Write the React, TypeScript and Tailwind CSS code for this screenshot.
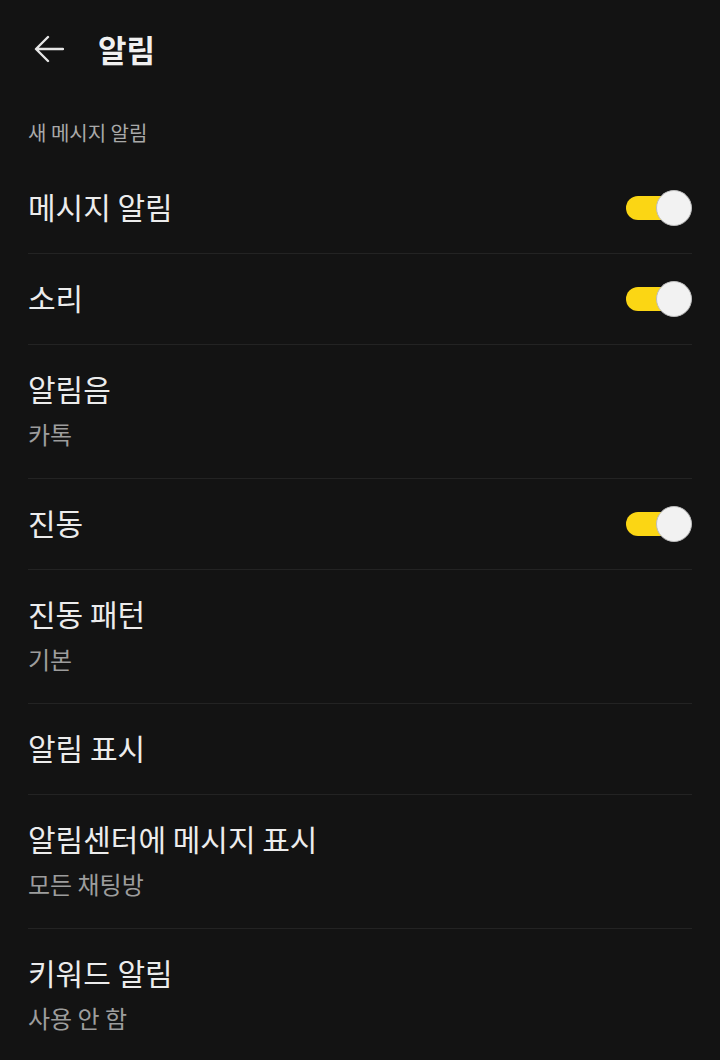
import React, { useState } from "react";

type Row = {
  title: string;
  sub?: string;
  toggle?: boolean;
};

const ROWS: Row[] = [
  { title: "메시지 알림", toggle: true },
  { title: "소리", toggle: true },
  { title: "알림음", sub: "카톡" },
  { title: "진동", toggle: true },
  { title: "진동 패턴", sub: "기본" },
  { title: "알림 표시" },
  { title: "알림센터에 메시지 표시", sub: "모든 채팅방" },
  { title: "키워드 알림", sub: "사용 안 함" },
];

const FONT = {
  fontFamily: '"Noto Sans CJK KR", "Noto Sans", sans-serif',
};

function Toggle({ on, onChange }: { on: boolean; onChange: () => void }) {
  return (
    <button
      type="button"
      onClick={onChange}
      className="relative h-[36px] w-[66px] shrink-0"
      aria-pressed={on}
    >
      <span
        className={
          on
            ? "absolute left-0 top-[6px] h-[24px] w-[58px] rounded-full bg-[#fbd614]"
            : "absolute left-0 top-[6px] h-[24px] w-[58px] rounded-full bg-[#555555]"
        }
      />
      <span
        className={
          on
            ? "absolute right-0 top-0 h-[36px] w-[36px] rounded-full border border-[#bdbdbd] bg-[#f2f2f2]"
            : "absolute left-0 top-0 h-[36px] w-[36px] rounded-full border border-[#bdbdbd] bg-[#f2f2f2]"
        }
      />
    </button>
  );
}

export default function App() {
  const [state, setState] = useState<Record<number, boolean>>({
    0: true,
    1: true,
    3: true,
  });

  return (
    <div className="min-h-[1060px] w-full bg-[#131313] text-[#ececec]" style={FONT}>
      <header className="flex h-[96px] items-center">
        <button type="button" className="ml-[34px] flex h-[30px] w-[30px] items-center justify-center">
          <svg width="30" height="30" viewBox="0 0 30 30" fill="none">
            <path
              d="M29 16H3M14 4L2 16L14 28"
              stroke="#e6e6e6"
              strokeWidth="2.4"
              strokeLinecap="round"
              strokeLinejoin="round"
            />
          </svg>
        </button>
        <h1 className="ml-[34px] text-[31px] font-bold leading-none text-[#f0f0f0]">알림</h1>
      </header>

      <div className="px-[28px] pt-[25px]">
        <h2 className="mb-[18px] text-[20px] leading-[24px] text-[#a9a9a9]">새 메시지 알림</h2>

        <ul>
          {ROWS.map((row, i) => (
            <li
              key={row.title}
              className={
                row.sub
                  ? "flex items-center justify-between border-b border-[#232323] pt-[25px] pb-[29px]"
                  : "flex h-[91px] items-center justify-between border-b border-[#232323]"
              }
            >
              <div className={row.sub ? "flex flex-col" : "mb-[4px] flex flex-col"}>
                <span className="text-[30px] leading-[36px] text-[#ececec]">{row.title}</span>
                {row.sub ? (
                  <span className="mt-[13px] text-[24px] leading-[30px] text-[#9d9d9d]">{row.sub}</span>
                ) : null}
              </div>
              {row.toggle ? (
                <Toggle
                  on={!!state[i]}
                  onChange={() => setState((s) => ({ ...s, [i]: !s[i] }))}
                />
              ) : null}
            </li>
          ))}
        </ul>
      </div>
    </div>
  );
}
